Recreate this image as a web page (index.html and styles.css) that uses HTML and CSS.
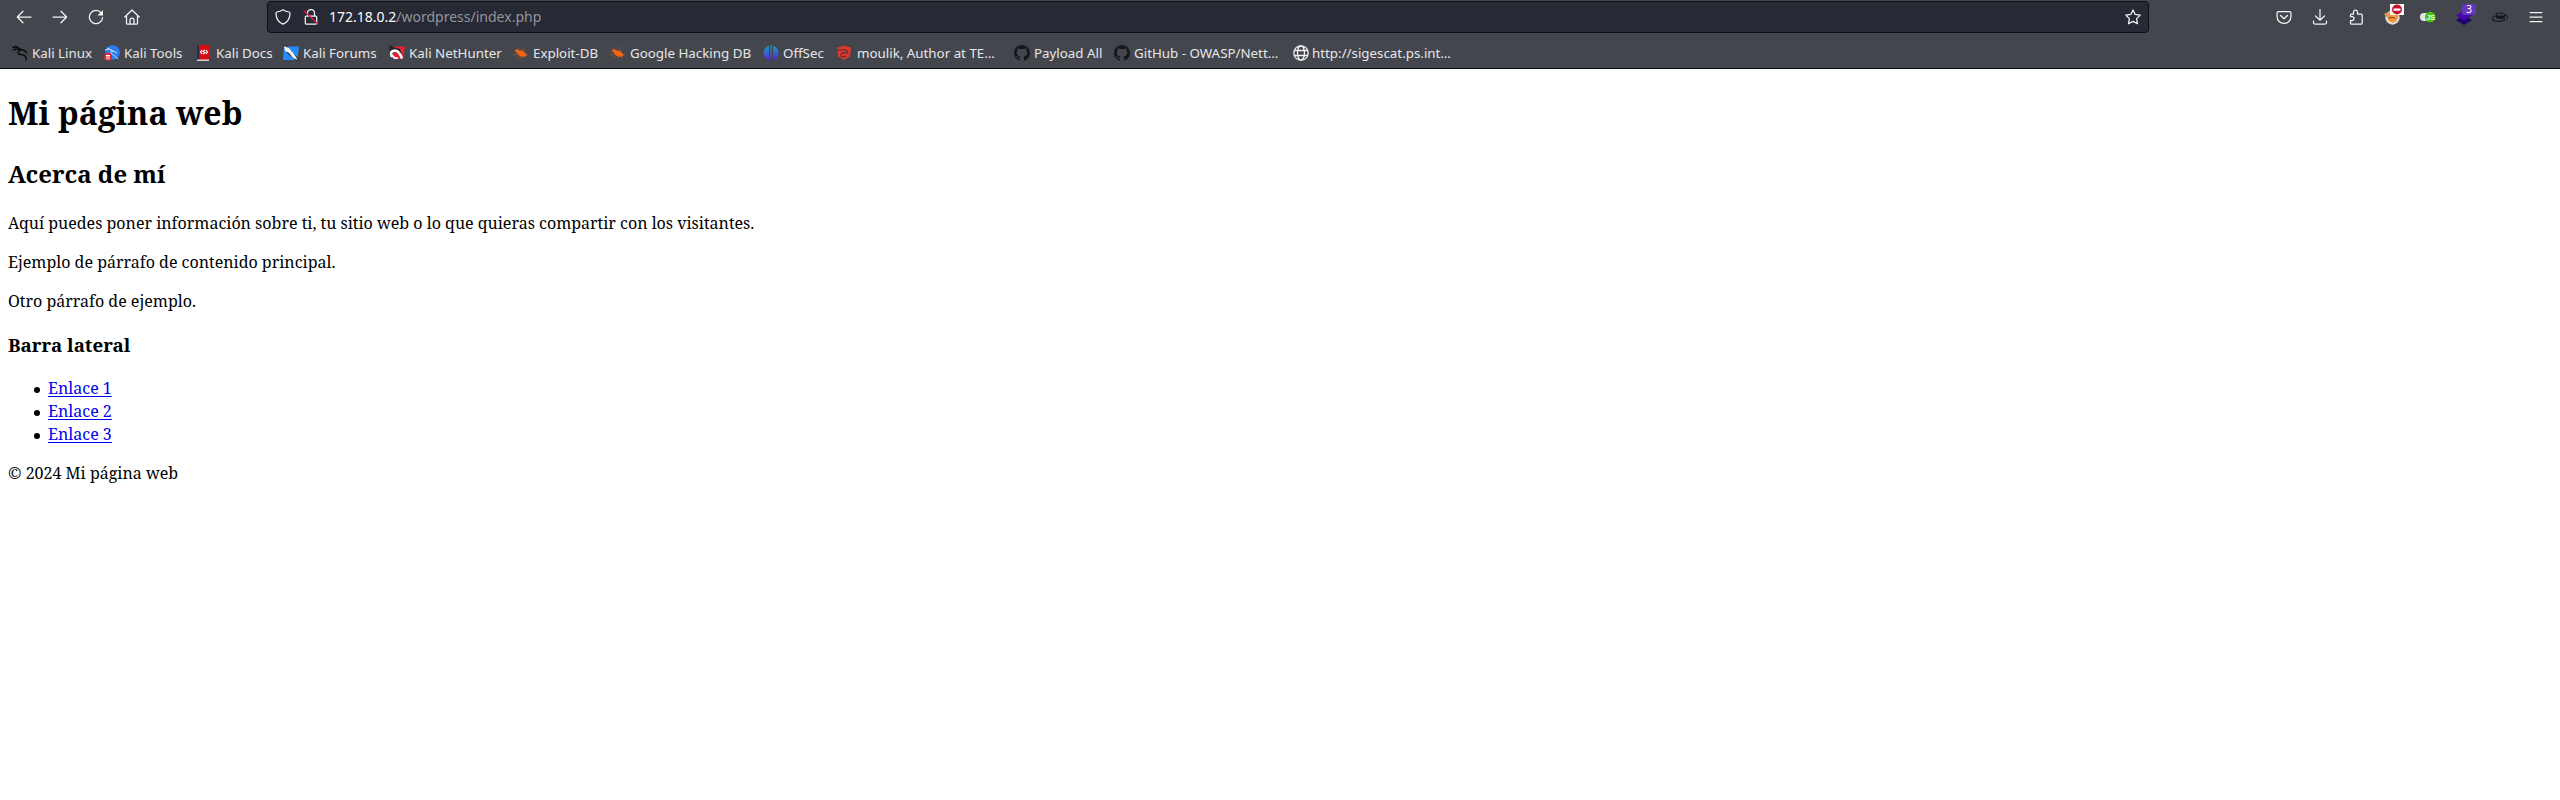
FILE: index.html
```html
<!DOCTYPE html>
<html lang="es">
<head>
<meta charset="utf-8">
<title>Mi página web</title>
<link rel="stylesheet" href="styles.css">
</head>
<body>
<header class="chrome">
  <div class="toolbar">
    <div class="nav">
      <svg class="icon" viewBox="0 0 16 16"><path d="M15 8H1.5M7 2.2 1.3 8 7 13.8"/></svg>
      <svg class="icon" viewBox="0 0 16 16"><path d="M1 8h13.5M9 2.2 14.7 8 9 13.8"/></svg>
      <svg class="icon" viewBox="0 0 16 16"><path d="M13.2 4A6.6 6.6 0 1 0 14.6 8.5"/><path class="solid" d="M15 1v5.5H9.5z"/></svg>
      <svg class="icon" viewBox="0 0 16 16"><path d="M.8 8 8 1l7.2 7M2.5 7v7.2q0 .8.8.8h9.4q.8 0 .8-.8V7M6 15v-4a2 2 0 0 1 4 0v4"/></svg>
    </div>
    <div class="urlbar">
      <svg class="icon" viewBox="0 0 16 16"><path d="M8 .8C6 2.2 4 2.8 1.900 3 1 3.200.9 4 1 5c.3 5 2.500 8.300 7 10.200C12.500 13.300 14.700 10 15 5c.1-1 0-1.800-.9-2C12 2.800 10 2.200 8 .8z"/></svg>
      <svg class="icon lock" viewBox="0 0 16 16"><path d="M4.500 7V4a3.500 3.500 0 0 1 7 0v3M3.300 7h9.400q1 0 1 1v6q0 1-1 1H3.300q-1 0-1-1V8q0-1 1-1z"/><path class="slash" d="M1 2l14 13"/></svg>
      <span class="url">172.18.0.2<span class="path">/wordpress/index.php</span></span>
      <svg class="icon star" viewBox="0 0 16 16"><path d="M8 .9 10.200 5.400 15.200 6.100 11.600 9.600 12.500 14.800 8 12.400 3.500 14.800 4.400 9.600.8 6.100 5.800 5.400z"/></svg>
    </div>
    <div class="tools">
      <svg class="icon" viewBox="0 0 16 16"><path d="M2.300 2.500h11.400q1.200 0 1.200 1.200v4a6.900 6.700 0 0 1-13.800 0v-4q0-1.200 1.200-1.200zM4.500 6.500 8 9.800l3.500-3.300"/></svg>
      <svg class="icon" viewBox="0 0 16 16"><path d="M8 .5v10.500M3.500 7 8 11.300 12.500 7M1.500 12v1.500q0 1.500 1.500 1.500h10q1.500 0 1.500-1.500V12"/></svg>
      <svg class="icon" viewBox="0 0 16 16"><path d="M5.500 5V3a2 2 0 0 1 4 0v2h3.700q1 0 1 1v8q0 1-1 1H3.500q-1 0-1-1v-2.500h1.600a1.900 1.900 0 0 0 0-3.800H2.500V6q0-1 1-1z"/></svg>
      <div class="ext">
        <svg viewBox="0 0 20 22"><circle cx="10.500" cy="13.500" r="7.200" fill="#dedede"/><path fill="#b98a5c" d="M1.500 10l4-2-1 5z"/><path fill="#f2993e" d="M4.500 11l2-3h7l3 4-2 5-3 2-5-2z"/><path fill="none" stroke="#75451c" d="M7 15l1-2 2 1 1-1 2 2"/><path fill="#fff" d="M8 0h14v11H8z"/><circle cx="15" cy="5.500" r="5" fill="#c5132f"/><path fill="#fff" d="M11.500 4.500h7v2.200h-7z"/></svg>
      </div>
      <div class="ext">
        <svg viewBox="0 0 20 22"><rect x="2" y="9" width="13" height="8" rx="4" fill="#e5e5e5"/><circle cx="12.300" cy="13" r="5.300" fill="#41c40a"/><text class="js" x="8.400" y="15.900">JS</text></svg>
      </div>
      <div class="ext">
        <svg viewBox="0 0 20 22"><path fill="#21006f" d="M2 16l8-5 8 5-8 5z"/><path fill="#4108ad" d="M2 11.500l8-5 8 5-8 5z"/></svg>
        <span class="badge">3</span>
      </div>
      <div class="ext">
        <svg viewBox="0 0 20 22"><ellipse cx="10" cy="14" rx="7.600" ry="3.200" fill="none" stroke="#15161a" transform="rotate(-8 10 14)"/><path fill="#17181c" d="M6 14V9.500q5-2 9 0V14q-4 2-9 0z"/><path fill="#46484f" d="M7 10q3-1 7 0v1.500H7z"/></svg>
      </div>
      <svg class="icon" viewBox="0 0 16 16"><path d="M2 3.500h12M2 8h12M2 12.500h12"/></svg>
    </div>
  </div>
  <nav class="bookmarks">
    <div class="bm"><svg viewBox="0 0 16 16"><path fill="none" stroke="#0b0b0c" stroke-width="1.500" d="M0 2.500Q5 1 9 4.500M1 5Q5 3.500 9 4.500L12 5.500 15 8M9 4.500C5 7 5 9 9 9.500S14 11 14.500 15.500M3 .8l5 3"/></svg><span>Kali Linux</span></div>
    <div class="bm"><svg viewBox="0 0 16 16"><circle cx="8.500" cy="7.500" r="7.300" fill="#2c7df5"/><path fill="none" stroke="#c6dffc" d="M1 5q5-2 8 1l4 2M3 3l6 3q-4 1-1 3t6 5"/><circle cx="4" cy="11.800" r="4" fill="#d62b36"/><path fill="none" stroke="#fff" d="M2 10.500h4M3 10.500v4M5 10.500v4"/></svg><span>Kali Tools</span></div>
    <div class="bm"><svg viewBox="0 0 16 16"><path fill="#d5d5d5" d="M1 14h12v2H1z"/><path fill="#d80d12" d="M3 0h10v14.500H3z"/><path fill="#252f58" d="M1 0h2.200v14.500H1z"/><path fill="none" stroke="#fff" stroke-width="1.200" d="M6 5 4.500 7 6 9M10 5l1.500 2L10 9M9 5 7 6.500l2 1L7 9"/></svg><span>Kali Docs</span></div>
    <div class="bm"><svg viewBox="0 0 16 16"><path fill="#258cff" d="M1 1.500h15L14.500 15H0z"/><path fill="#202327" d="M0 0l4 1 12 13-1 2-4-2L4 8z"/><path fill="#f2f4f5" d="M1 1l5 2 5 6 4 6-5-2-4-5-4-2z"/></svg><span>Kali Forums</span></div>
    <div class="bm"><svg viewBox="0 0 16 16"><path fill="#e32232" d="M5 1.500h11L14 14H4z"/><path fill="#202327" d="M0 0l4 2 7 2 2 6-6-3-6 1z"/><path fill="none" stroke="#fff" stroke-width="2.600" d="M3 12Q0 6 6 5.500q4 0 7 8"/><path fill="none" stroke="#fff" stroke-width="1.800" d="M3 10q2 4 6 3"/></svg><span>Kali NetHunter</span></div>
    <div class="bm"><svg viewBox="0 0 16 16"><g id="bug"><path fill="none" stroke="#a85222" stroke-width=".8" d="M1 7l4-1M0 10l5-1M3 13l4-3M6 2v4M10 2L9 6M12 4l-2 3M11 9l4 1M10 11l3 2M8 11v3"/><path fill="#f26511" d="M2 4.500l2-.500 2 1.500q4-.500 5.500 2l2.500 2.500-2 1.500q-4 1-6.500-1.500T2 4.500z"/></g></svg><span>Exploit-DB</span></div>
    <div class="bm"><svg viewBox="0 0 16 16"><use href="#bug"/></svg><span>Google Hacking DB</span></div>
    <div class="bm"><svg viewBox="0 0 16 16"><defs><linearGradient id="os" x2="0" y2="16" gradientUnits="userSpaceOnUse"><stop stop-color="#16a2b8"/><stop offset="1" stop-color="#5f20d4"/></linearGradient></defs><path fill="url(#os)" d="M6 .800v14.400Q.500 13 .500 8T6 .800zM7.400.300h1.400v15.400H7.400zM10.200.800Q15.700 3 15.700 8t-5.500 7.200z"/></svg><span>OffSec</span></div>
    <div class="bm"><svg viewBox="0 0 16 16"><path fill="#e2352d" d="M0 2.500 7 .800l7 1.700-1 9L7 15l-6-3.500z"/><path fill="none" stroke="#4a3135" stroke-width="1.100" d="M0 5.500l8-1 3 2.500-2 1.500-3-1Q3 9 4 11t5 0"/></svg><span>moulik, Author at TE…</span></div>
    <div class="bm"><svg viewBox="0 0 16 16"><path id="gh" fill="#17181b" d="M8 0C3.580 0 0 3.580 0 8c0 3.540 2.290 6.530 5.470 7.590.4.070.55-.17.55-.38 0-.19-.01-.82-.01-1.490-2.010.37-2.530-.49-2.690-.94-.09-.23-.48-.94-.82-1.130-.28-.15-.68-.52-.01-.53.63-.01 1.080.58 1.230.82.72 1.210 1.870.87 2.330.66.07-.52.28-.87.51-1.070-1.780-.2-3.640-.89-3.640-3.950 0-.87.31-1.590.82-2.150-.08-.2-.36-1.020.08-2.120 0 0 .67-.21 2.200.82a7.600 7.600 0 0 1 4 0c1.530-1.040 2.200-.82 2.200-.82.44 1.100.16 1.920.08 2.120.51.56.82 1.270.82 2.150 0 3.070-1.870 3.750-3.650 3.950.29.25.54.73.54 1.480 0 1.070-.01 1.930-.01 2.200 0 .21.15.46.55.38A8 8 0 0 0 16 8c0-4.420-3.580-8-8-8z"/></svg><span>Payload All</span></div>
    <div class="bm"><svg viewBox="0 0 16 16"><use href="#gh"/></svg><span>GitHub - OWASP/Nett…</span></div>
    <div class="bm last"><svg viewBox="0 0 16 16"><g fill="none" stroke="#f0f0f1" stroke-width="1.300"><circle cx="8" cy="8" r="7.200"/><ellipse cx="8" cy="8" rx="3.500" ry="7.200"/><path d="M1.500 5.500h13M1.500 10.500h13"/></g></svg><span>http://sigescat.ps.int…</span></div>
  </nav>
</header>
<main class="page">
  <h1>Mi página web</h1>
  <h2>Acerca de mí</h2>
  <p>Aquí puedes poner información sobre ti, tu sitio web o lo que quieras compartir con los visitantes.</p>
  <p>Ejemplo de párrafo de contenido principal.</p>
  <p>Otro párrafo de ejemplo.</p>
  <h3>Barra lateral</h3>
  <ul>
    <li><a href="#">Enlace 1</a></li>
    <li><a href="#">Enlace 2</a></li>
    <li><a href="#">Enlace 3</a></li>
  </ul>
  <p>© 2024 Mi página web</p>
</main>
</body>
</html>
```
FILE: styles.css
```css
* { box-sizing: border-box; }
body { margin: 0; background: #fff; color: #000; }
.chrome {
  height: 69px;
  background: #44464e;
  border-bottom: 1px solid #0b0c10;
  font-family: "Noto Sans", "Open Sans", sans-serif;
}
.toolbar { display: flex; height: 34px; padding-top: 1px; }
.nav { display: flex; gap: 20px; width: 267px; padding: 8px 0 0 16px; }
.icon { width: 16px; height: 16px; flex: none; fill: none; stroke: #f4f4f5; stroke-width: 1.25; stroke-linejoin: round; stroke-linecap: round; }
.solid { fill: #f4f4f5; stroke: none; }
.urlbar {
  display: flex;
  width: 1882px;
  height: 32px;
  padding: 7px 7px 0 7px;
  background: #272934;
  border: 1px solid #0d0f14;
  border-radius: 4px;
}
.lock { margin-left: 12px; }
.slash { stroke: #e21a4b; }
.url { margin: -1px 0 0 10px; font-size: 14px; line-height: 18px; color: #fbfbfe; white-space: nowrap; }
.path { color: #94959b; }
.star { margin-left: auto; }
.tools { display: flex; gap: 20px; padding: 8px 0 0 127px; }
.ext { position: relative; width: 16px; height: 16px; }
.ext svg { display: block; width: 20px; height: 22px; margin: -5px 0 0 -2px; overflow: visible; }
.js { font: bold 7px "Liberation Sans", sans-serif; fill: #fff; }
.badge {
  position: absolute;
  left: 6px;
  top: -5px;
  width: 14px;
  height: 11px;
  border-radius: 2px;
  background: #6835bd;
  color: #fff;
  font-size: 10px;
  line-height: 11px;
  text-align: center;
}
.bookmarks { display: flex; height: 34px; padding: 11px 0 0 12px; }
.bm { display: flex; gap: 4px; flex: none; font-size: 13.33px; line-height: 16px; color: #e6e6e8; white-space: nowrap; }
.bm svg { width: 16px; height: 16px; flex: none; }
.bm:nth-child(1) { width: 92px; }
.bm:nth-child(2) { width: 92px; }
.bm:nth-child(3) { width: 87px; }
.bm:nth-child(4) { width: 106px; }
.bm:nth-child(5) { width: 124px; }
.bm:nth-child(6) { width: 97px; }
.bm:nth-child(7) { width: 153px; }
.bm:nth-child(8) { width: 74px; }
.bm:nth-child(9) { width: 177px; }
.bm:nth-child(10) { width: 100px; }
.bm:nth-child(11) { width: 179px; }
.bm.last { gap: 3px; }

.page {
  padding: 21px 8px 0;
  font-family: "Noto Serif", "DejaVu Serif", serif;
  font-size: 16px;
  line-height: 23px;
}
h1, h2, h3, p, ul { margin: 0; }
h1 { font-size: 32px; line-height: 46px; }
h2 { margin-top: 21px; font-size: 24px; line-height: 34px; }
h3 { margin-top: 19px; font-size: 18.72px; line-height: 26px; }
p { margin-top: 16px; }
h2 + p { margin-top: 21px; }
ul { margin-top: 19px; padding-left: 26px; list-style: none; }
li { display: flex; align-items: center; gap: 8px; }
li::before { content: ""; width: 6px; height: 6px; margin-top: 2px; border-radius: 50%; background: #000; }
a { color: #0000ee; text-decoration-thickness: 1px; text-underline-offset: 2px; }
```
